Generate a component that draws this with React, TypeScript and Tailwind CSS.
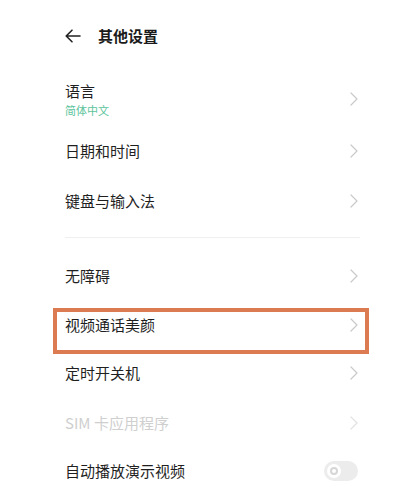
const font = { fontFamily: '"Noto Sans CJK SC", "Noto Sans", sans-serif' }

const Chevron = ({ faded }: { faded?: boolean }) => (
  <svg width="8" height="14" viewBox="0 0 8 14" fill="none" className="shrink-0">
    <path d="M1 1l6 6-6 6" stroke={faded ? '#e2e2e2' : '#c9c9c9'} strokeWidth="1.2" strokeLinecap="round" strokeLinejoin="round" />
  </svg>
)

const Row = ({ label, h, muted, children }: { label: string; h: string; muted?: boolean; children?: React.ReactNode }) => (
  <div className={`relative flex items-center justify-between ${h}`}>
    <span className={`text-[15px] leading-[18px] ${muted ? 'text-[#cfcfcf]' : 'text-[#1f1f1f]'}`}>{label}</span>
    {children ?? <Chevron faded={muted} />}
  </div>
)

export default function App() {
  return (
    <div className="w-[412px] h-[497px] bg-white overflow-hidden pl-[65px] pr-[54px]" style={font}>
      <div className="flex items-center h-[72px] gap-[17px]">
        <svg width="16" height="14" viewBox="0 0 16 14" fill="none">
          <path d="M15 7H1.5M7 1.2L1.2 7 7 12.8" stroke="#222" strokeWidth="1.6" strokeLinecap="round" strokeLinejoin="round" />
        </svg>
        <h1 className="text-[15px] font-bold text-[#1a1a1a] leading-[18px]">其他设置</h1>
      </div>

      <div className="flex items-center justify-between h-[54px]">
        <div className="flex flex-col">
          <span className="text-[15px] leading-[18px] text-[#1f1f1f]">语言</span>
          <span className="text-[11px] leading-[14px] mt-[3px] text-[#5cc49c]">简体中文</span>
        </div>
        <Chevron />
      </div>
      <Row label="日期和时间" h="h-[50px]" />
      <Row label="键盘与输入法" h="h-[50px]" />

      <div className="mt-[11px] mb-[13px] h-px bg-[#efefef] -mr-[2px]" />

      <Row label="无障碍" h="h-[50px]" />
      <Row label="视频通话美颜" h="h-[48px]">
        <Chevron />
        <div className="absolute left-[-12px] right-[-11px] top-[7px] h-[46px] border-4 border-[#dc7a52]" />
      </Row>
      <Row label="定时开关机" h="h-[48px]" />
      <Row label="SIM 卡应用程序" h="h-[52px]" muted />
      <Row label="自动播放演示视频" h="h-[44px]">
        <div className="w-[34px] h-[20px] rounded-full bg-[#ececec] flex items-center pl-[3px]">
          <div className="w-[14px] h-[14px] rounded-full bg-white flex items-center justify-center">
            <div className="w-[8px] h-[8px] rounded-full border-2 border-[#d6d6d6]" />
          </div>
        </div>
      </Row>
    </div>
  )
}
